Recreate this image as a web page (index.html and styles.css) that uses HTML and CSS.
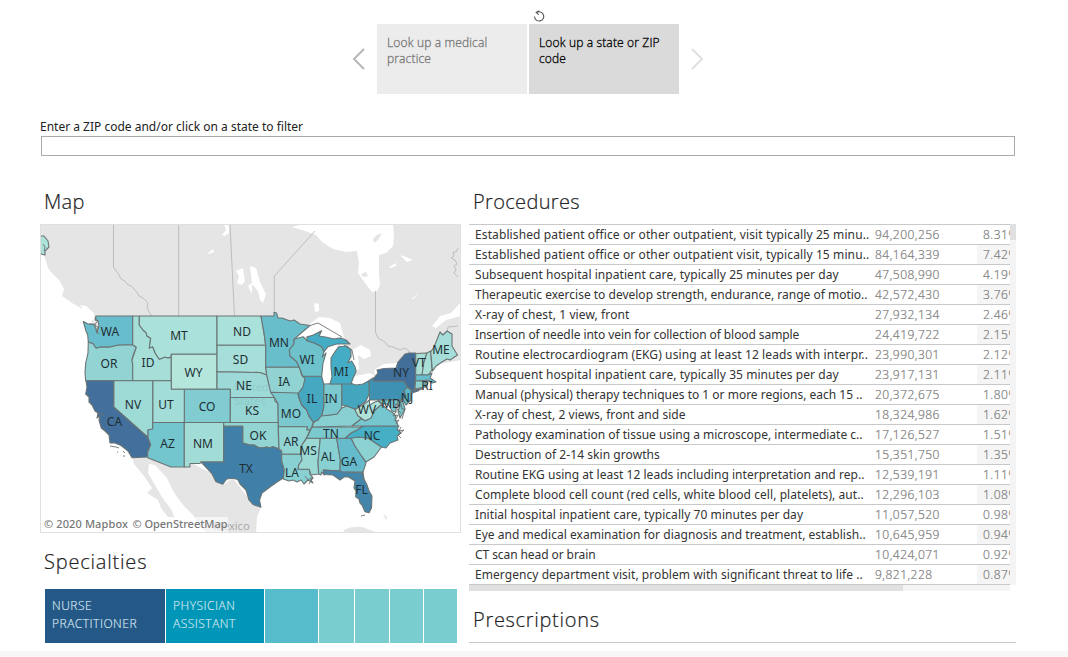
FILE: index.html
```html
<!DOCTYPE html>
<html lang="en">
<head>
<meta charset="utf-8">
<title>Medical practice lookup</title>
<link rel="stylesheet" href="styles.css">
</head>
<body>
<main class="page">
  <nav class="story">
    <svg class="reset" viewBox="0 0 12 12"><path d="M3.4 2.7A4.6 4.6 0 1 1 1.5 6.600M6.300 .8 3.200 2.300 5.600 4.600"/></svg>
    <div class="story-row">
      <svg class="arrow" viewBox="0 0 14 24"><path d="M12 2 2 12 12 22"/></svg>
      <div class="tabs">
        <a class="tab">Look up a medical practice</a>
        <a class="tab active">Look up a state or ZIP code</a>
      </div>
      <svg class="arrow next" viewBox="0 0 14 24"><path d="M2 2 12 12 2 22"/></svg>
    </div>
  </nav>
  <section class="filter">
    <label class="filter-label" for="zip">Enter a ZIP code and/or click on a state to filter</label>
    <input id="zip" class="filter-input">
  </section>
  <div class="columns">
    <section class="left">
      <h2>Map</h2>
      <svg class="map" viewBox="40 224 421 309">
        <rect x="40" y="224" width="421" height="309" fill="#fff"/>
        <g class="land">
          <path d="M40 224H461V360L440 364 428 376 415 386 380 390 350 380 325 370 310 345 270 330H96L92 322 86 318 79 313 72 307 65 302 62 296 64 289 59 280 52 273 48 268 45 258 42 251 40 248Z"/>
          <path d="M132 457 147 456 171 466 190 462 211 473 216 482 223 485 233 478 246 495 261 507 257 517 256 533H207L199 526 193 515 184 506 177 497 172 489 167 478 155 465 149 464 148 473 155 485 162 497 171 509 175 518 168 517 161 508 158 500 147 493 152 488 144 476 134 464Z"/>
          <path d="M344 530Q352 526 362 527L373 531 376 533H343ZM383 513 387 517 386 521Z"/>
        </g>
        <g class="water">
          <path d="M292 227 305 231 316 235 322 242 333 249 346 252 357 251 359 263 358 273 365 283 372 292 377 291 380 285 379 275 379 255 386 253 393 246 394 237 393 225H300ZM250 266 256 268 260 282 266 294 263 303 260 300 258 291 252 284ZM314 303 319 304 319 311 315 312ZM224 224H229V233L225 236 222 235 226 230ZM208 253 213 249 214 252 209 254ZM236 271 243 268 245 281 242 285 237 283 239 276ZM248 286 252 283 252 294ZM389 267 396 263 396 266 390 268ZM400 255 406 257 413 260 407 262ZM412 299 418 293 414 299Z"/>
          <path d="M461 302 451 313 440 316 432 326 436 328 446 320 461 316ZM62 296 72 303 84 310 93 317 91 322 81 316 70 309 61 301ZM80 305 86 306 94 313 95 322 85 313Z"/>
          <path d="M294 338 304 328 315 320 319 317 330 318 340 323 344 337 332 338 320 336 313 335ZM323 348 330 344 338 345 337 350 332 355 332 377 329 384 323 382 321 376ZM338 344 346 343 352 350 361 345 370 350 371 356 364 359 358 355 359 370 354 368 348 364 351 354ZM355 376 370 373 375 376 369 382 360 385 352 383ZM374 370 384 364 397 363 397 368 382 369 375 375Z"/>
        </g>
        <path class="land" d="M373 239 377 235 382 233 378 240 374 243ZM361 274 366 272 368 276 363 277Z"/>
        <g class="provinces"><path d="M113.5 224V267L119 275 121 279 125 281 127 284 131 286 136 291 139 296 143 298 148 303 147 307 149 312 152 316M178.7 224V316M230 224 234.5 316M274.3 312V276L315 231M375.5 291V332L378 338 385 342 388 346 393 347 400 350 405 348 409 351V353M458 248 456 252 453 252 454 256 451 258 455 260 457 264 454 266 456 270 454 273 458 277M447 333 448 327 458 326"/></g>
        <text class="country" x="213" y="530">Mexico</text>
        <g class="states">
          <path fill="#aee3db" d="M40 236 44 236 48 241 49 247 45 251 45 255 41 254 40 250Z"/>
          <path fill="#68bdcc" d="M83.3 321.5 88 324 94 324 96 329 97 333 99 326 98 321 95 320 96 316H132.7V344.7L117.7 345.3 109 347.2 101 347 96 348.3 93.3 344 88.3 342 87.7 335 86 331Z"/>
          <path fill="#92d4d3" d="M88.3 342 93.3 344 96 348.3 101 347 109 347.2 117.7 345.3 132.7 344.7 136.3 347.3 133 356 132 360 132.7 364V380.7H85.7L85 373 85.7 363 88 353Z"/>
          <path fill="#a6dfd8" d="M132.7 316H139.3V325L143 330 146 332.7 147 336 150.7 338.3 149.3 348 152.7 346.7 155.3 353.3 159.3 359.3 165 357 168 358 171.3 356.7V380.7H132.7V364L132 360 136.3 347.3 132.7 344.7Z"/>
          <path fill="#aae1da" d="M139.3 316H217V354.3H171.3V356.7L168 358 165 357 159.3 359.3 155.3 353.3 152.7 346.7 149.3 348 150.7 338.3 147 336 146 332.7 143 330 139.3 325Z"/>
          <path fill="#b4e6dc" d="M171.3 354.3H217V389.3H171.3Z"/>
          <path fill="#aae1da" d="M217 316H261L264 333 265.7 345.3H217Z"/>
          <path fill="#a6dfd9" d="M217 345.3H265.7V367L266.7 375 260 372.5 217 371.7Z"/>
          <path fill="#9dd9d6" d="M217 371.7 260 372.5 266.7 375 269.3 385 271.7 392.3 274.3 397.5H230.3V389.3H217Z"/>
          <path fill="#80ccd1" d="M184.3 389.3H230.3V422.5H184.3Z"/>
          <path fill="#96d6d4" d="M230.3 397.5H274.3L275 401 278 403.5 278.3 422.5H230.3Z"/>
          <path fill="#a2ddd8" d="M152.7 380.7H171.3V389.3H184.3V422.5H152.7Z"/>
          <path fill="#9fdbd6" d="M113.7 380.7H152.7V429L148 430V437.5L113.7 407Z"/>
          <path fill="#426f9b" d="M86 380.7H113.7V407L148 437.5 150.7 444.7 147.7 452V457L132 457.7 128 451 121 445.5 115 443 110 443 109 435 105 431 101.3 428 99 420 100 416 97 418 98 413 95 411 92 405 89 402 89 397 85.7 394 87 387Z"/>
          <path fill="#74c6ce" d="M152.7 422.5H184.3V467H171L147.7 457.7V452L150.7 444.7 148 437.5V430L152.7 429Z"/>
          <path fill="#a1dcd7" d="M184.3 422.5H223.7V462H201L200 463.5H190V467H184.3Z"/>
          <path fill="#91d4d2" d="M223.7 422.5H278.3V435L279 449 273 446.7 269 448 266.7 447 262 448 258.3 447.5 254 445 250 445 242.7 443V426.3H223.7Z"/>
          <path fill="#4080a8" d="M223.7 426.3H242.7V443L250 445 254 445 258.3 447.5 262 448 266.7 447 269 448 273 446.7 279 449 281.7 451V461L284.3 470 283.3 478 277 482 270 487 262 493 259.5 500 261 507.3 253 504.5 249 500 246 490 240 484 237.7 479.5 232.7 478.3 226.7 479 222.7 484.3 216 481.7 211.7 473.3 201 462H223.7Z"/>
          <path fill="#69becc" d="M261 316H274V312.3L276.5 313 278 318 282 318 290 321 294 320 300 324 310 325.5 300 334 294 339.3V344L289.3 350 290 356 296.7 361.7 299.3 367.3H265.7V345.3L264 333Z"/>
          <path fill="#90d3d2" d="M265.7 367.3H299.3L301.7 375 305 378.3 304 386 300 391 298 394 270.7 392.3 266.7 375Z"/>
          <path fill="#7bc9cf" d="M270.7 392.3 298 393 298.5 397 301.7 405 306.7 410 309.3 416.7 313.3 422 312 426.7 310 430H306.7L307.3 426.7H278.3L278 403.5 274.3 397.5Z"/>
          <path fill="#91d4d2" d="M278.3 426.7H307.3L306.7 430H310L307 437 302 445 301 454.3H281.7V451L279 449Z"/>
          <path fill="#88d0d1" d="M281.7 454.3H301L302 460 298.7 465 298 469.3H309.3L310 474 313 478 311 480 313 483 308 480 304 484 301 480 297 482 293 480 289 481 283.3 479 284.3 470 281.7 461Z"/>
          <path fill="#9bd9d5" d="M306.7 438.3H320.3L318 462 318.7 474 311 475 309.3 469.3H298L298.7 465 302 460 301 454.3 302 445Z"/>
          <path fill="#88d0d1" d="M320.3 438.3H336.7L340.3 460 340 471 323.3 470 324.5 475 321.5 472 321 475 318.7 474 318 462Z"/>
          <path fill="#65bbcb" d="M336.7 438.3H351L355 446 361 455 366 463 363 472 342 472 340 471 340.3 460Z"/>
          <path fill="#4385ab" d="M323.3 470 340 471 342 472 361 472.7 363 472 364 479 367 485 369 491 372 496 371.5 508 369 512.7 365 511.7 362 505 360 503 359 499 355.7 496.7 356 491 354 488 355 481 348 476.7 344 477 340 480 333 475 324 474.5Z"/>
          <path fill="#8dd2d2" d="M351 438 358 437 368 438 381.5 447 374 457 366 462 361 455 355 446Z"/>
          <path fill="#47afc5" d="M362 426H399L397 429 401 433 397 436 398 440 390 443 386 448 381.5 447 368 438 358 437 351 438.3H344.7L351 433 357 430Z"/>
          <path fill="#7ac9cf" d="M312 427H362L357 430 351 433 344.7 438.3H306.7Z"/>
          <path fill="#88cfd1" d="M312 427 314 422 318 420 321.7 415 330 415 337 414 341.7 408 347 406 355 409 358 415.7 361.7 418.5 352 426Z"/>
          <path fill="#75c6ce" d="M352 426 361.7 418.5 365 420.7 370.7 418.3 375 410 381.7 404.3 387 409 393 413 396 416 395 419 398 425V426Z"/>
          <path fill="#afe2da" d="M357 408 363 405 369.5 400V405L375 402 378 401 382 404 375 410 370.7 418.3 365 420.7 361.7 418.5 358 415.7 355 410Z"/>
          <path fill="#44a5bf" d="M341.7 383.5 350 383 356 385 363 384 369 380.7 369.5 393 366 401 357 408 355 409 347 406 341.7 405Z"/>
          <path fill="#7bc9cf" d="M323.7 384 341.7 383.5V408L337 414 330 415 321.7 416 323.7 407Z"/>
          <path fill="#46a7c0" d="M302.7 376.3H321.7L323.7 384V407L321.7 415 318 420 313.3 422 309.3 416.7 306.7 410 301.7 405 298 394 303 387 305 378.3Z"/>
          <path fill="#6dc2cc" d="M294 339.3 303 336.7 307 340.7 315 343.3 321.7 346.7 324 351.7 322.3 357 326 353 323 363 321.7 376.3H302.7L299.3 367.3 296.7 361.7 290 356 289.3 350 294 344Z"/>
          <path fill="#44adc5" d="M307 337 313.3 335 321.7 330.7 319 336 326.7 337.3 334 339 340 338 346 340 350 344 336.7 344 328 346.7 324 351.7 321.7 346.7 315 343.3 307 340.7Z"/>
          <path fill="#44adc5" d="M339 346.7 346.7 346 351 350V356.7L347.7 363 351.7 361 355 366.7 356 371.7 353 378 351 384H330L332 376.7 331 366.7 331 358 335 351.7Z"/>
          <path fill="#3e91b3" d="M369 380.7 373 378 374 381H404L408 386 404 392 406 396 401 400H369.5Z"/>
          <path fill="#416f9a" d="M373 379 378 373 377 370 384 368.5 396 368 398 362 405 354 409 353H415.7V375L414.5 389 412 391 407 386 404 381H374Z"/>
          <path fill="#416f9a" d="M411 391 422 388 418 391 412 393Z"/>
          <path fill="#a8e0d8" d="M415.7 353.5 427 353 424 362 422 375H415.7Z"/>
          <path fill="#a8e0d8" d="M427 353 430.7 351 432 370 428 375H422L424 362Z"/>
          <path fill="#a5ded8" d="M432.5 371 430.7 352 434 347 438 337 440 332 443 335 447 331 452 334V346L457.5 355 450 360 447 359 442 362 436 366Z"/>
          <path fill="#67bdcb" d="M415.7 375H428L432 373 430 378 436 382 432 383 428 380 415.5 381Z"/>
          <path fill="#8bd1d2" d="M415.5 381H425V387L415 389ZM425 381H428L427 387H425Z"/>
          <path fill="#58b7c8" d="M407 387 411 390V400L406 405 403 400 406 396 404 391Z"/>
          <path fill="#77c7ce" d="M378 400H400L402 409H405L400 418 398 411 400 406 396 404V412L392 411 388 404 382 404ZM400 400 403 402 405 409H402Z"/>
        </g>
        <path class="coast" d="M95 317 98 321 94 325 98 327 96 331 99 334M110 446 116 447M117 452H118M123 451 125 453M123 456H125M116 447 119 448M396 412 393 416 398 415 395 421 399 420 396 424M401 427 399 431 404 430 398 435 401 438M405 409 402 419M398 399 397 409 401 413M305 476 308 480 313 477 309 484M413 390 424 389M361 516 365 515M310 325.5 318 323 342 337M344 345 352 350 354 360M362 473 364 480M97 413 104 415M43 244 45 247 44 251M89 324 96 325"/>
        <g class="ghost"><text x="234" y="391">United</text><text x="234" y="405">States</text></g>
        <g class="labels">
          <text x="110" y="336">WA</text><text x="179" y="340">MT</text><text x="242" y="336">ND</text><text x="109" y="368">OR</text><text x="148" y="367">ID</text><text x="193.5" y="377">WY</text><text x="240.5" y="364">SD</text><text x="244" y="390">NE</text><text x="279" y="347">MN</text><text x="307" y="364">WI</text><text x="284" y="386">IA</text><text x="341" y="376">MI</text><text x="401" y="377">NY</text><text x="419" y="367">VT</text><text x="441" y="354">ME</text><text x="427" y="390">RI</text><text x="133" y="409">NV</text><text x="166" y="409">UT</text><text x="207" y="411">CO</text><text x="252" y="415">KS</text><text x="291" y="418">MO</text><text x="312" y="403">IL</text><text x="331" y="403">IN</text><text x="367" y="414">WV</text><text x="391" y="408">MD</text><text x="407" y="402">NJ</text><text x="114.5" y="426">CA</text><text x="167.5" y="448">AZ</text><text x="203" y="448">NM</text><text x="258" y="440">OK</text><text x="291" y="446">AR</text><text x="331" y="438">TN</text><text x="372" y="440">NC</text><text x="308" y="455">MS</text><text x="328" y="461">AL</text><text x="349" y="466">GA</text><text x="292" y="477">LA</text><text x="361.5" y="494">FL</text><text x="246" y="473">TX</text>
        </g>
        <rect x="41" y="517" width="187" height="15" fill="#fff" fill-opacity=".6"/>
        <text class="credit" x="44" y="528" textLength="84">© 2020 Mapbox</text><text class="credit" x="132.5" y="528" textLength="95">© OpenStreetMap</text>
        <rect x="40.5" y="224.500" width="420" height="308" fill="none" stroke="#e0e0e0"/>
      </svg>
      <h2 class="spec-title">Specialties</h2>
      <div class="treemap">
        <div class="cell c1">NURSE PRACTITIONER</div><div class="cell c2">PHYSICIAN ASSISTANT</div><div class="cell c3"></div><div class="cell"></div><div class="cell"></div><div class="cell"></div><div class="cell"></div>
      </div>
    </section>
    <section class="right">
      <h2>Procedures</h2>
      <div class="table-wrap">
        <div class="table">
          <div class="row wide"><span>Established patient office or other outpatient, visit typically 25 minu..</span><b>94,200,256</b><i>8.31%</i></div>
          <div class="row wide"><span>Established patient office or other outpatient visit, typically 15 minu..</span><b>84,164,339</b><i>7.42%</i></div>
          <div class="row mid"><span>Subsequent hospital inpatient care, typically 25 minutes per day</span><b>47,508,990</b><i>4.19%</i></div>
          <div class="row"><span>Therapeutic exercise to develop strength, endurance, range of motio..</span><b>42,572,430</b><i>3.76%</i></div>
          <div class="row wide"><span>X-ray of chest, 1 view, front</span><b>27,932,134</b><i>2.46%</i></div>
          <div class="row tight"><span>Insertion of needle into vein for collection of blood sample</span><b>24,419,722</b><i>2.15%</i></div>
          <div class="row wide"><span>Routine electrocardiogram (EKG) using at least 12 leads with interpr..</span><b>23,990,301</b><i>2.12%</i></div>
          <div class="row mid"><span>Subsequent hospital inpatient care, typically 35 minutes per day</span><b>23,917,131</b><i>2.11%</i></div>
          <div class="row"><span>Manual (physical) therapy techniques to 1 or more regions, each 15 ..</span><b>20,372,675</b><i>1.80%</i></div>
          <div class="row mid"><span>X-ray of chest, 2 views, front and side</span><b>18,324,986</b><i>1.62%</i></div>
          <div class="row"><span>Pathology examination of tissue using a microscope, intermediate c..</span><b>17,126,527</b><i>1.51%</i></div>
          <div class="row mid"><span>Destruction of 2-14 skin growths</span><b>15,351,750</b><i>1.35%</i></div>
          <div class="row slight"><span>Routine EKG using at least 12 leads including interpretation and rep..</span><b>12,539,191</b><i>1.11%</i></div>
          <div class="row mid"><span>Complete blood cell count (red cells, white blood cell, platelets), aut..</span><b>12,296,103</b><i>1.08%</i></div>
          <div class="row mid"><span>Initial hospital inpatient care, typically 70 minutes per day</span><b>11,057,520</b><i>0.98%</i></div>
          <div class="row slight"><span>Eye and medical examination for diagnosis and treatment, establish..</span><b>10,645,959</b><i>0.94%</i></div>
          <div class="row tight"><span>CT scan head or brain</span><b>10,424,071</b><i>0.92%</i></div>
          <div class="row mid"><span>Emergency department visit, problem with significant threat to life ..</span><b>9,821,228</b><i>0.87%</i></div>
        </div>
        <div class="vbar"><div class="vthumb"></div></div>
        <div class="hbar"><div class="hthumb"></div></div>
      </div>
      <h2 class="rx-title">Prescriptions</h2>
      <div class="rx-line"></div>
    </section>
  </div>
  <footer class="bottom"></footer>
</main>
</body>
</html>
```
FILE: styles.css
```css
* { box-sizing: border-box; }
body { margin: 0; background: #fff; font-family: "Noto Sans", "Open Sans", sans-serif; color: #333; }
.page { width: 1068px; height: 657px; overflow: hidden; display: flex; flex-direction: column; }
.story { height: 94px; padding-top: 10px; display: flex; flex-direction: column; align-items: center; }
.reset { width: 12px; height: 12px; margin: 0 0 2px 9px; fill: none; stroke: #555; stroke-width: 1.1; }
.story-row { display: flex; align-items: center; gap: 11px; margin-right: 12px; }
.arrow { width: 14px; height: 24px; fill: none; stroke: #b8b8b8; stroke-width: 2; }
.arrow.next { stroke: #e0e0e0; }
.tabs { display: flex; gap: 2px; }
.tab { width: 150px; height: 70px; padding: 11px 10px; background: #ececec; color: #777; font: 300 12px/16px "Open Sans", "Noto Sans", sans-serif; letter-spacing: .15px; -webkit-text-stroke: .3px; }
.tab.active { background: #dadada; color: #000; }
.filter { margin: 25px 53px 0 40px; display: flex; flex-direction: column; }
.filter-label { font-size: 12px; line-height: 16px; letter-spacing: 0; color: #222; }
.filter-input { height: 20px; margin: 1px 0 0 1px; border: 1px solid #aaa; outline: 0; }
.columns { display: flex; padding-left: 40px; gap: 8px; height: 495px; }
h2 { margin: 0; font: 300 20px/28px "Open Sans", "Noto Sans", sans-serif; letter-spacing: .35px; color: #222; -webkit-text-stroke: .2px; }
.left { width: 421px; padding-top: 32px; }
.left h2, .right h2 { padding-left: 4px; height: 36px; }
.map { display: block; width: 421px; height: 309px; }
.land { fill: #e5e5e5; }
.water { fill: #fff; }
.provinces { fill: none; stroke: #b9b9b9; stroke-width: .9; }
.states { stroke: #6a7474; stroke-width: 1.1; stroke-linejoin: round; }
.coast { fill: none; stroke: #6c7373; stroke-width: .9; }
.labels { font-size: 12px; text-anchor: middle; fill: #1e2e33; }
.country { font-size: 11px; fill: #aaa; }
.ghost { font-size: 11px; fill: #5a8a88; fill-opacity: .18; }
.credit { font: 500 11px "Noto Sans", sans-serif; fill: #777; }
.left .spec-title { height: 56px; padding-top: 15px; letter-spacing: .8px; }
.treemap { display: grid; grid-template-columns: 120px 98px 53px 35px 34px 33px 33px; gap: 1px; height: 54px; margin-left: 5px; }
.cell { background: #79cdcf; color: #dde9f0; font: 300 12px/18px "Open Sans", sans-serif; padding: 8px 7px; letter-spacing: .5px; -webkit-text-stroke: .15px; }
.c1 { background: #245887; }
.c2 { background: #0096b7; }
.c3 { background: #56bccb; }
.right { width: 547px; padding-top: 32px; }
.table-wrap { display: grid; grid-template-columns: 541px 6px; grid-template-rows: 361px 6px; }
.table { overflow: hidden; border-top: 1px solid #c9c9c9; }
.row { display: grid; grid-template-columns: 406px 102px 50px; height: 20px; line-height: 19px; font-size: 12px; border-bottom: 1px solid #c9c9c9; white-space: nowrap; }
.row span { padding-left: 6px; color: #333; }
.wide span { letter-spacing: .11px; }
.mid span { letter-spacing: .06px; }
.slight span { letter-spacing: .03px; }
.tight span { letter-spacing: -.08px; }
.row b, .row i { font: 300 12px/19px "Open Sans", sans-serif; color: #777; letter-spacing: .5px; -webkit-text-stroke: .2px; }
.row i { padding-left: 6px; }
.row:nth-child(even) i { background: #f5f5f5; }
.vbar, .hbar { background: #f4f4f4; }
.vthumb { height: 16px; background: #e0e0e0; }
.hthumb { width: 434px; height: 6px; background: #e0e0e0; }
.right .rx-title { height: 51px; padding-top: 15px; letter-spacing: .7px; }
.rx-line { height: 1px; background: #c9c9c9; }
.bottom { height: 6px; background: #f7f7f7; }
```
